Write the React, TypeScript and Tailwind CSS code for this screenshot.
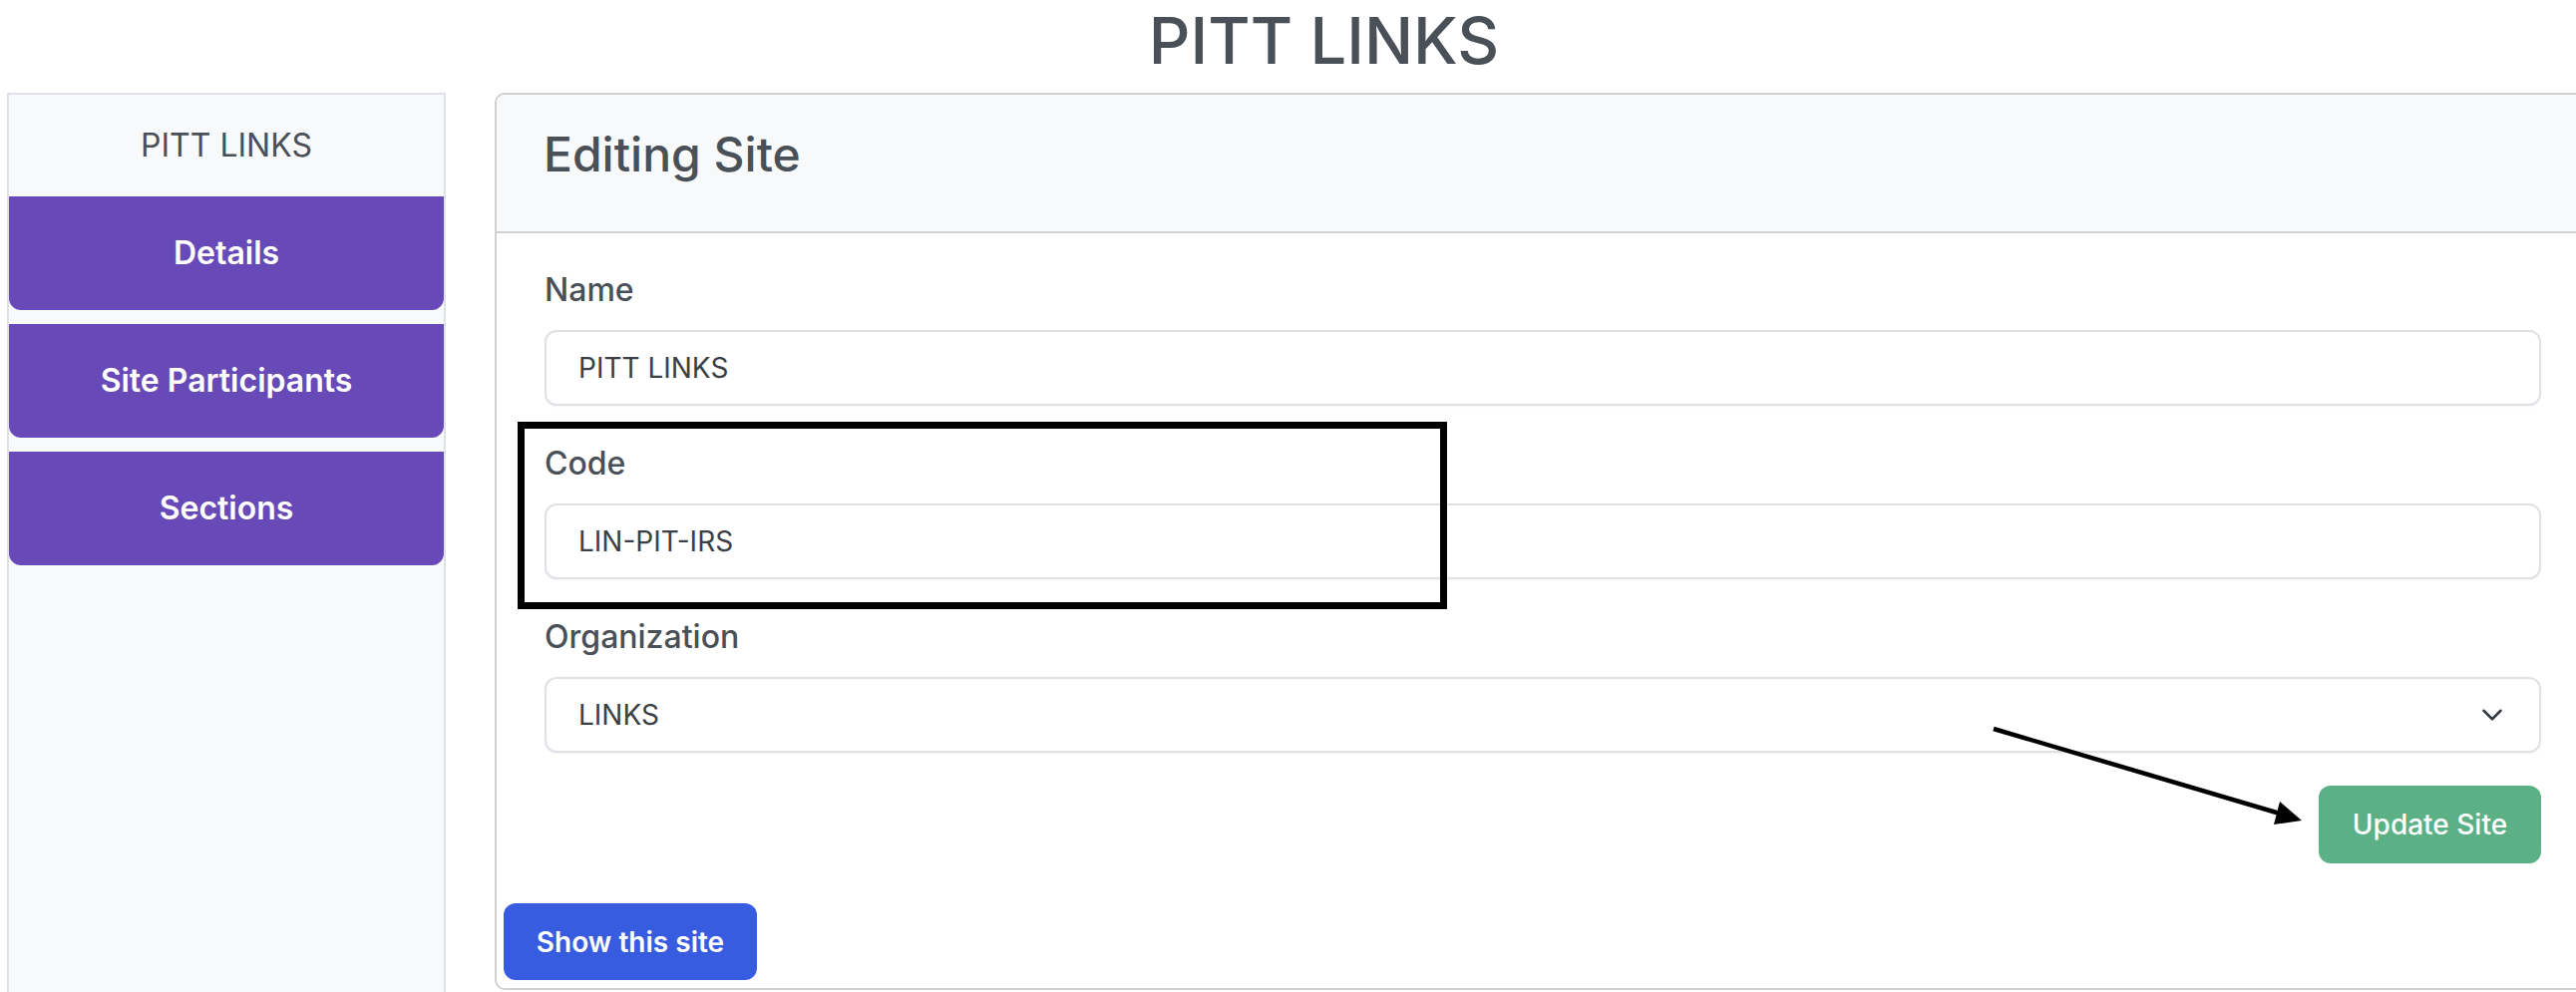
import { ChevronDown } from 'lucide-react'

const NAV = ['Details', 'Site Participants', 'Sections']

function Field({ label, value, select }: { label: string; value: string; select?: boolean }) {
  return (
    <div>
      <label className="block text-[32px] leading-[48px] font-medium text-[#495057] mb-[16px]">{label}</label>
      <div className="h-[76px] w-full bg-white border-2 border-[#dee2e6] rounded-[12px] shadow-[0_1px_2px_rgba(0,0,0,0.05)] pl-[32px] pr-[30px] flex items-center justify-between text-[28px] text-[#3b4046]">
        <span>{value}</span>
        {select && <ChevronDown size={34} strokeWidth={1.8} className="text-[#343a40]" />}
      </div>
    </div>
  )
}

export default function App() {
  return (
    <div className="relative w-[2583px] h-[995px] overflow-hidden bg-white font-['Inter',sans-serif] text-[#495057]">
      <div className="h-[93px] pl-[72px] text-center">
        <h1 className="text-[65px] leading-[81px] font-medium text-[#495057]">PITT LINKS</h1>
      </div>

      <div className="flex pl-[7px] gap-[49px]">
        <aside className="w-[440px] h-[905px] shrink-0 bg-[#f8f9fa] border-2 border-b-0 border-[#dee2e6]">
          <div className="h-[102px] flex items-center justify-center text-[32px] text-[#495057]">PITT LINKS</div>
          {NAV.map((item) => (
            <button
              key={item}
              className="w-full h-[114px] mb-[14px] bg-[#6849b8] rounded-b-[12px] text-white text-[32px] font-semibold flex items-center justify-center"
            >
              {item}
            </button>
          ))}
        </aside>

        <section className="w-[2102px] shrink-0 h-[900px] border-2 border-[#d0d0d0] rounded-[10px] flex flex-col">
          <div className="bg-[#f8f9fa] border-b-2 border-[#d0d0d0] rounded-t-[8px] pl-[47px] pt-[30px] pb-[47px]">
            <h3 className="text-[48px] leading-[60px] font-medium text-[#495057]">Editing Site</h3>
          </div>

          <div className="px-[48px] pt-[33px] flex flex-col gap-[34px]">
            <Field label="Name" value="PITT LINKS" />
            <Field label="Code" value="LIN-PIT-IRS" />
            <Field label="Organization" value="LINKS" select />
          </div>

          <div className="flex justify-end pr-[48px] pt-[33px]">
            <button className="h-[78px] w-[223px] bg-[#5bb086] rounded-[12px] text-white text-[28px] font-medium">
              Update Site
            </button>
          </div>

          <div className="pl-[7px] pt-[40px]">
            <button className="h-[77px] w-[254px] bg-[#385cdf] rounded-[12px] text-white text-[28px] font-semibold">
              Show this site
            </button>
          </div>
        </section>
      </div>

      {/* annotation overlay */}
      <div className="absolute left-[519px] top-[423px] w-[932px] h-[188px] border-[7px] border-black" />
      <svg className="absolute left-0 top-0 pointer-events-none" width="2583" height="995">
        <line x1="1999" y1="731" x2="2286" y2="816" stroke="#000" strokeWidth="4.5" />
        <polygon points="2308,823 2286,804 2280,827" fill="#000" />
      </svg>
    </div>
  )
}
